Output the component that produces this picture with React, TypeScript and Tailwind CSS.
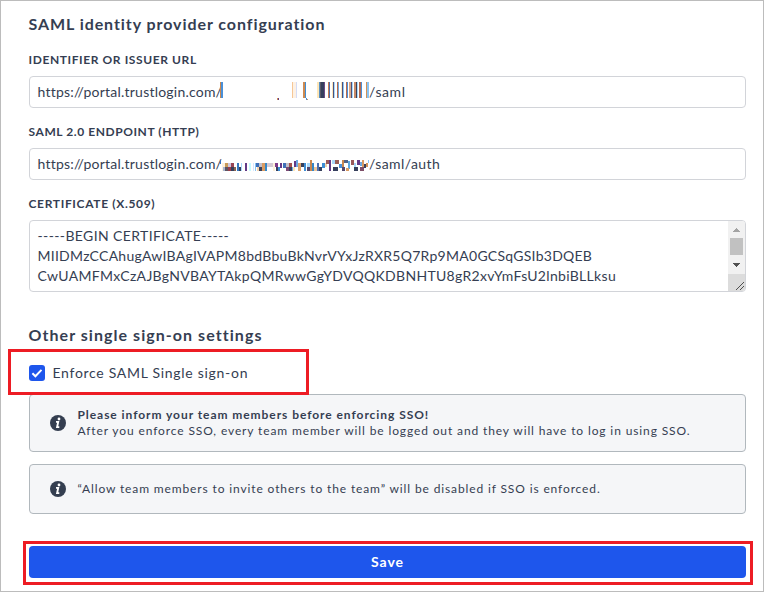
import React from "react";

type Bar = [x: number, width: number, color: string];
type Block = [x: number, y: number, width: number, height: number, color: string];

const issuerBars: Bar[] = [
  [0, 1, "#c98850"], [1, 2, "#4a90d9"],
  [72, 1, "#f6c796"], [73, 3, "#fdf1e4"], [76, 1, "#d5dcf5"],
  [83, 2, "#cf8a50"], [85, 1, "#3f8fd6"],
  [97, 2, "#fde6b8"], [99, 1, "#5a8fc0"], [100, 1, "#5a5a68"], [101, 3, "#363f5e"], [104, 1, "#6c4a86"],
  [108, 1, "#c87952"], [109, 1, "#4d70b0"], [112, 1, "#fde6b8"], [113, 1, "#49507f"], [114, 1, "#a9d9fb"],
  [117, 1, "#b76b4e"], [118, 1, "#6da9e0"], [121, 1, "#fde6b8"], [122, 1, "#49507f"], [123, 1, "#8ac4f4"],
  [126, 1, "#b76b4e"], [127, 1, "#4a90d9"], [129, 2, "#d9a684"], [131, 1, "#49507f"], [132, 1, "#a9d9fb"],
  [134, 2, "#c98b68"], [136, 1, "#37405c"], [137, 1, "#a9d9fb"],
  [139, 2, "#b76b4e"], [141, 1, "#4a90d9"],
  [146, 1, "#d29357"], [147, 2, "#8ac4f4"],
];

const endpointBlocks: Block[] = [
  [0, 0, 1, 4, "#356fc0"], [2, 3, 3, 8, "#fdf1dc"], [3, 7, 2, 4, "#a9b5d0"], [5, 3, 3, 4, "#c89a58"], [5, 7, 3, 4, "#5b5563"],
  [8, 3, 3, 4, "#cfc8e0"], [8, 7, 3, 4, "#9a3f4a"], [11, 3, 3, 4, "#984554"], [11, 7, 3, 4, "#37405c"], [14, 7, 2, 4, "#8b6551"],
  [17, 3, 2, 8, "#3578c0"], [19, 7, 2, 4, "#37405c"], [21, 3, 1, 8, "#a9d9fb"], [25, 3, 2, 8, "#633a86"],
  [29, 3, 2, 8, "#c8faff"], [33, 3, 1, 8, "#d5e7ff"], [35, 3, 1, 8, "#8ac4f4"],
  [36, 3, 3, 4, "#3e6fb8"], [39, 3, 4, 4, "#c2bfc8"], [37, 7, 2, 4, "#f4d2aa"], [39, 7, 3, 4, "#37405c"], [42, 3, 3, 8, "#d99b62"],
  [45, 3, 2, 8, "#3588c9"], [47, 3, 6, 4, "#d4cad4"], [53, 3, 2, 8, "#fdf1dc"], [55, 3, 3, 4, "#7e3b8a"],
  [56, 7, 2, 4, "#37405c"], [58, 7, 2, 4, "#3f8fd6"], [60, 3, 2, 5, "#633a86"], [57, 11, 2, 1, "#8b6551"],
  [63, 3, 3, 5, "#3e6fb8"], [66, 3, 3, 4, "#c2bfc8"], [66, 7, 3, 4, "#7b4a74"], [69, 3, 3, 4, "#a4514d"], [69, 7, 3, 4, "#37405c"],
  [72, 7, 2, 4, "#6da9e0"], [74, 1, 2, 6, "#633a86"], [73, 7, 2, 4, "#fde6b8"], [76, 0, 2, 7, "#6da9e0"],
  [78, 3, 3, 8, "#dea46b"], [81, 3, 3, 4, "#37405c"], [84, 3, 2, 8, "#3f8fd6"], [87, 3, 3, 4, "#a9d9fb"], [87, 7, 3, 4, "#52476b"],
  [90, 0, 2, 11, "#c98850"], [92, 3, 2, 8, "#3588c9"], [94, 7, 3, 4, "#edc59a"], [97, 3, 2, 8, "#4d70b0"],
  [99, 7, 3, 4, "#37405c"], [102, 3, 3, 5, "#3f8fd6"], [105, 3, 2, 4, "#efd1aa"],
  [106, 0, 4, 4, "#9b5959"], [109, 0, 2, 11, "#633a86"], [112, 0, 3, 4, "#a9d9fb"], [115, 0, 4, 4, "#985e58"],
  [113, 7, 5, 4, "#363f5e"], [119, 4, 3, 4, "#4a90d9"], [122, 0, 2, 7, "#c98850"], [124, 0, 4, 3, "#526387"],
  [122, 7, 3, 4, "#52476b"], [128, 1, 2, 8, "#5ba6df"], [126, 8, 3, 3, "#d99b62"], [131, 0, 3, 5, "#9b5959"],
  [134, 3, 2, 5, "#a9d9fb"], [134, 7, 4, 4, "#37405c"], [137, 0, 3, 5, "#633a86"], [140, 2, 2, 4, "#6da9e0"],
  [142, 0, 2, 7, "#d99b62"], [140, 7, 4, 4, "#7e4e67"], [144, 4, 2, 4, "#37405c"], [146, 3, 2, 4, "#d29357"], [148, 0, 1, 3, "#8ac4f4"],
];

function Label({ className, children }: { className: string; children: React.ReactNode }) {
  return <div className={`h-4 text-[12px] leading-4 font-bold whitespace-nowrap ${className}`}>{children}</div>;
}

function InfoIcon() {
  return (
    <svg className="h-4 w-4 shrink-0" viewBox="0 0 16 16">
      <circle cx="8" cy="8" r="8" fill="#343e50" />
      <circle cx="9" cy="4" r="1.4" fill="#fff" />
      <path d="M6 6.9H8.2L7.1 12.1H9.3" fill="none" stroke="#fff" strokeWidth="1.9" />
    </svg>
  );
}

function Scrollbar() {
  return (
    <svg className="h-[70px] w-[17px] shrink-0" viewBox="0 0 17 70" shapeRendering="crispEdges">
      <rect width="17" height="70" fill="#f1f1f1" />
      <path d="M8 7h1v1h1v1h1v1h1v1H5v-1h1v-1h1v-1h1z" fill="#a3a3a3" />
      <rect x="2" y="17" width="13" height="17" fill="#c1c1c1" />
      <path d="M5 42h7v1h-1v1h-1v1H9v1H8v-1H7v-1H6v-1H5z" fill="#505050" />
      <rect y="53" width="17" height="17" fill="#dcdcdc" />
      <path d="M8 69l8-8M12 69l4-4" stroke="#505050" strokeWidth="1" shapeRendering="auto" />
    </svg>
  );
}

export default function App() {
  return (
    <div className="relative h-[592px] w-[764px] overflow-hidden border border-[#bcbcbc] bg-white pt-[13px] pl-7 font-['Lato',sans-serif] text-[#353e52]">
      <div className="w-[717px]">
        <h2 className="-ml-[0.5px] h-5 text-[16px] leading-5 font-bold tracking-[0.93px] whitespace-nowrap">SAML identity provider configuration</h2>
        <div className="mt-[18px] -ml-[0.5px]"><Label className="tracking-[0.6px]">IDENTIFIER OR ISSUER URL</Label></div>
        <div className="mt-2 flex h-8 items-center rounded border border-[#d2d4d9] pl-[7.5px] text-[14px]">
          <span className="w-[182.5px] pb-0.5 tracking-[0.22px] whitespace-nowrap">https://portal.trustlogin.com/</span>
          <svg className="h-5 w-[149px]" viewBox="0 0 149 20" shapeRendering="crispEdges">
            {issuerBars.map(([x, w, c]) => <rect key={x} x={x} y="0" width={w} height="16" fill={c} />)}
            <rect x="57" y="16" width="1" height="2" fill="#d29357" />
            <rect x="58" y="16" width="1" height="2" fill="#633a86" />
            <rect x="86" y="16" width="1" height="2" fill="#4a90d9" />
            <rect x="87" y="17" width="1" height="1" fill="#d29357" />
          </svg>
          <span className="pb-0.5 tracking-[0.6px]">/saml</span>
        </div>
        <div className="mt-4 -ml-[0.5px]"><Label className="tracking-[0.57px]">SAML 2.0 ENDPOINT (HTTP)</Label></div>
        <div className="mt-2 flex h-8 items-center rounded border border-[#d2d4d9] pl-[7.5px] text-[14px]">
          <span className="w-[182.5px] pb-0.5 tracking-[0.22px] whitespace-nowrap">https://portal.trustlogin.com/</span>
          <svg className="h-3.5 w-[149px]" viewBox="0 0 149 14" shapeRendering="crispEdges">
            {endpointBlocks.map(([x, y, w, h, c], i) => <rect key={i} x={x} y={y + 3} width={w} height={h} fill={c} />)}
          </svg>
          <span className="pb-0.5 tracking-[0.42px]">/saml/auth</span>
        </div>
        <div className="mt-4 -ml-[0.5px]"><Label className="tracking-[0.66px]">CERTIFICATE (X.509)</Label></div>
        <div className="mt-2 flex h-[72px] justify-between overflow-hidden rounded border border-[#d2d4d9] pl-[7.5px] text-[14px] leading-5 whitespace-nowrap">
          <div className="pt-[5px]">
            <div className="tracking-[0.38px]">-----BEGIN CERTIFICATE-----</div>
            <div className="tracking-[0.26px]">MIIDMzCCAhugAwIBAgIVAPM8bdBbuBkNvrVYxJzRXR5Q7Rp9MA0GCSqGSIb3DQEB</div>
            <div className="tracking-[0.31px]">CwUAMFMxCzAJBgNVBAYTAkpQMRwwGgYDVQQKDBNHTU8gR2xvYmFsU2lnbiBLLksu</div>
          </div>
          <Scrollbar />
        </div>
        <h2 className="mt-[33px] -ml-[0.5px] h-5 text-[16px] leading-5 font-bold tracking-[1.05px]">Other single sign-on settings</h2>
        <label className="mt-[17px] flex h-5 items-center gap-[7.5px] text-[14px]">
          <svg className="mt-0.5 h-4 w-4" viewBox="0 0 16 16">
            <rect width="16" height="16" rx="3" fill="#1e56ec" />
            <path d="M3.4 8.2l3 3 6.1-6.3" fill="none" stroke="#fff" strokeWidth="2" />
          </svg>
          <span className="tracking-[0.71px]">Enforce SAML Single sign-on</span>
        </label>
        <div className="mt-3 flex h-[58px] items-center gap-[11.5px] rounded-sm border border-[#b1b8bd] bg-[#f5f6f8] pl-5 text-[12px] leading-4 whitespace-nowrap">
          <InfoIcon />
          <div>
            <div className="font-bold tracking-[0.94px]">Please inform your team members before enforcing SSO!</div>
            <div className="tracking-[0.88px]">After you enforce SSO, every team member will be logged out and they will have to log in using SSO.</div>
          </div>
        </div>
        <div className="mt-3 flex h-[50px] items-center gap-[11.5px] rounded-sm border border-[#b1b8bd] bg-[#f5f6f8] pl-5 text-[12px] leading-4 whitespace-nowrap">
          <InfoIcon />
          <div className="tracking-[0.87px]">“Allow team members to invite others to the team” will be disabled if SSO is enforced.</div>
        </div>
        <button className="mt-8 block h-8 w-full rounded bg-[#1e56ec] pb-0.5 text-[14px] font-bold tracking-[0.9px] text-white">Save</button>
      </div>
      <div className="pointer-events-none absolute top-[348px] left-[7px] h-[46px] w-[301px] border-[3px] border-[#ed1c24]" />
      <div className="pointer-events-none absolute top-[540px] left-[22px] h-[44px] w-[730px] border-[3px] border-[#ed1c24]" />
    </div>
  );
}
